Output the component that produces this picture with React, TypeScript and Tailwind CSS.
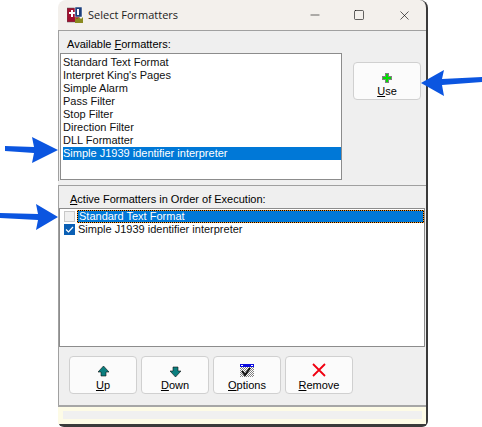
import { Minus, Square, X } from "lucide-react";
import type { ReactNode } from "react";

const available = [
  "Standard Text Format",
  "Interpret King's Pages",
  "Simple Alarm",
  "Pass Filter",
  "Stop Filter",
  "Direction Filter",
  "DLL Formatter",
];

function ToolButton({ icon, hot, after, className }: { icon: ReactNode; hot: string; after: string; className: string }) {
  return (
    <div className={`flex flex-col items-center rounded-[4px] border border-[#d0d0d0] bg-[#fbfbfb] ${className}`}>
      <div className="flex h-[20px] items-end justify-center">{icon}</div>
      <div className="mt-[1px] text-[11px] leading-[14px] text-black">
        <span className="underline">{hot}</span>
        {after}
      </div>
    </div>
  );
}

function Arrow({ className, d }: { className: string; d: string }) {
  return (
    <svg className={`absolute ${className}`} width="62" height="26" viewBox="0 0 62 26">
      <path d={d} fill="#0b55e0" />
    </svg>
  );
}

export default function App() {
  return (
    <div className="relative h-[427px] w-[482px] overflow-hidden bg-white font-['Liberation_Sans',sans-serif] text-[11px]">
      <div className="ml-[58px] flex h-[427px] w-[370px] flex-col rounded-t-[8px] rounded-b-[6px] border-r-2 border-b-[3px] border-[#3a3a3a] bg-[#f3f0ec]">
        {/* title bar */}
        <div className="flex h-[30px] shrink-0 items-center pl-[9px]">
          <svg width="16" height="16" viewBox="0 0 16 16" className="shrink-0">
            <rect x="0" y="1" width="12" height="14" fill="#a01030" stroke="#555" strokeWidth="0.5" />
            <rect x="8" y="0" width="7" height="10" fill="#1c3f7c" stroke="#fff" strokeWidth="0.5" />
            <rect x="2" y="5" width="6" height="2" fill="#fff" />
            <rect x="4" y="3" width="2" height="7" fill="#fff" />
            <rect x="10" y="2" width="2" height="6" fill="#fff" />
            <path d="M8 16 L8 10 L10 12 L12 10 L14 12 L16 10 L16 16 Z" fill="#8a8a20" />
          </svg>
          <span className="ml-[5px] font-['Open_Sans',sans-serif] text-[11px] text-[#222]">Select Formatters</span>
          <div className="ml-auto flex items-center">
            <Minus size={14} strokeWidth={1} className="mr-[31px] text-black" />
            <Square size={12} strokeWidth={1.2} className="mr-[32px] text-black" />
            <X size={15} strokeWidth={1} className="mr-[14px] text-black" />
          </div>
        </div>

        {/* available */}
        <div className="flex h-[151px] shrink-0 border-t border-l border-[#a0a0a0] bg-[#efefef]">
          <div className="w-[283px] shrink-0">
            <div className="h-[22px] pt-[6px] pl-[8px] leading-[14px] text-black">
              Available <span className="underline">F</span>ormatters:
            </div>
            <div className="ml-[1px] h-[127px] border border-[#8c8c8c] bg-white pt-[2px] pl-[2px] leading-[13px] text-[#111]">
              {available.map((name) => (
                <div key={name} className="h-[13px] whitespace-nowrap">{name}</div>
              ))}
              <div className="h-[13px] whitespace-nowrap bg-[#0078d7] text-white">Simple J1939 identifier interpreter</div>
            </div>
          </div>
          <ToolButton
            className="mt-[31px] ml-[11px] h-[38px] w-[68px]"
            icon={
              <svg width="10" height="10" viewBox="0 0 10 10">
                <path d="M3 0h4v3h3v4H7v3H3V7H0V3h3z" fill="#808080" />
                <path d="M4 1h2v3h3v2H6v3H4V6H1V4h3z" fill="#00e000" />
              </svg>
            }
            hot="U"
            after="se"
          />
        </div>

        {/* splitter */}
        <div className="h-[5px] shrink-0 border-b border-[#a0a0a0] bg-[#f0f0f0]" />

        {/* active */}
        <div className="flex h-[219px] shrink-0 flex-col border-l border-[#a0a0a0] bg-[#efefef]">
          <div className="h-[22px] pt-[6px] pl-[11px] leading-[14px] text-black">
            <span className="underline">A</span>ctive Formatters in Order of Execution:
          </div>
          <div className="mr-[1px] h-[139px] border border-[#8c8c8c] bg-white pt-[1px] pl-[4px] text-[#111]">
            <div className="flex h-[13px] items-center">
              <div className="mr-[2px] h-[11px] w-[11px] border border-[#c8c8c8] bg-[#f0f0f0]" />
              <div className="h-[13px] flex-1 border border-dotted border-[#ff9a20] bg-black">
                <div className="h-[11px] bg-[#0078d7] pl-[1px] leading-[11px] whitespace-nowrap text-white">Standard Text Format</div>
              </div>
            </div>
            <div className="flex h-[13px] items-center">
              <div className="mr-[3px] flex h-[11px] w-[11px] items-center justify-center bg-[#0a5fb4]">
                <svg width="9" height="9" viewBox="0 0 9 9"><path d="M1 4.5 L3.5 7 L8 2" fill="none" stroke="#fff" strokeWidth="1.2" /></svg>
              </div>
              <div className="whitespace-nowrap leading-[13px]">Simple J1939 identifier interpreter</div>
            </div>
          </div>
          <div className="flex gap-[4px] pt-[9px] pl-[10px]">
            <ToolButton
              className="h-[38px] w-[68px]"
              icon={
                <svg width="11" height="11" viewBox="0 0 11 11">
                  <path d="M5.5 0 L11 6 H8 V10 H3 V6 H0 Z" fill="#0b7f7f" stroke="#111" strokeWidth="0.6" />
                </svg>
              }
              hot="U"
              after="p"
            />
            <ToolButton
              className="h-[38px] w-[68px]"
              icon={
                <svg width="11" height="11" viewBox="0 0 11 11">
                  <path d="M5.5 11 L11 5 H8 V1 H3 V5 H0 Z" fill="#0b7f7f" stroke="#111" strokeWidth="0.6" />
                </svg>
              }
              hot="D"
              after="own"
            />
            <ToolButton
              className="h-[38px] w-[68px]"
              icon={
                <svg width="14" height="13" viewBox="0 0 14 13">
                  <defs>
                    <pattern id="dither" width="2" height="2" patternUnits="userSpaceOnUse">
                      <rect width="2" height="2" fill="#fff" />
                      <rect width="1" height="1" fill="#808080" />
                      <rect x="1" y="1" width="1" height="1" fill="#808080" />
                    </pattern>
                  </defs>
                  <rect x="0" y="0" width="14" height="13" fill="url(#dither)" />
                  <rect x="0" y="0" width="14" height="3" fill="#0a0ae0" />
                  <rect x="1" y="1" width="2" height="1" fill="#fff" />
                  <rect x="11" y="1" width="2" height="1" fill="#fff" />
                  <path d="M2 7 L5 11 L10 4" fill="none" stroke="#111" strokeWidth="2" />
                </svg>
              }
              hot="O"
              after="ptions"
            />
            <ToolButton
              className="h-[38px] w-[68px]"
              icon={
                <svg width="14" height="14" viewBox="0 0 14 14">
                  <path d="M1 1 L13 13 M13 1 L1 13" stroke="#f00010" strokeWidth="1.8" />
                </svg>
              }
              hot="R"
              after="emove"
            />
          </div>
        </div>

        {/* status bar */}
        <div className="flex-1 border-t-2 border-[#a6a6a6] bg-[#fdfbe6] pt-[4px] pr-[4px] pl-[5px]">
          <div className="h-[8px] bg-[#f0f0f0]" />
        </div>
      </div>

      <Arrow className="left-[-4px] top-[137px]" d="M62 13 L36 0 L38 10 L9 9 L9 14 L38 16 L36 26 Z" />
      <Arrow className="left-[-4px] top-[204px]" d="M62 13 L40 0 L42 10 L4 9 L4 14 L42 16 L40 26 Z" />
      <Arrow className="left-[421px] top-[70px]" d="M0 13 L23 0 L21 9 L62 7 L62 12 L21 15 L23 26 Z" />
    </div>
  );
}
